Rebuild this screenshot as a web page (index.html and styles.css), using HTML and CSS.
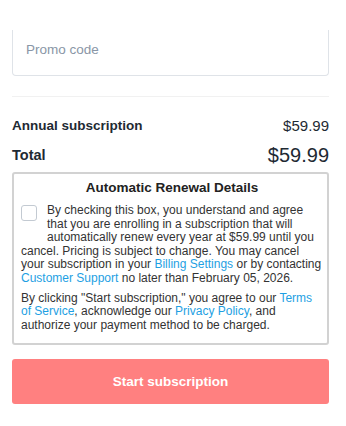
FILE: index.html
```html
<!DOCTYPE html>
<html lang="en">
<head>
<meta charset="utf-8">
<title>Checkout</title>
<link rel="stylesheet" href="styles.css">
</head>
<body>
<div class="page">
  <div class="promo"><span class="promo-text">Promo code</span></div>
  <hr class="divider">
  <div class="row row-annual">
    <span class="label">Annual subscription</span>
    <span class="price">$59.99</span>
  </div>
  <div class="row row-total">
    <span class="label-total">Total</span>
    <span class="price-total">$59.99</span>
  </div>
  <div class="renewal">
    <h2 class="renewal-title">Automatic Renewal Details</h2>
    <p class="renewal-text"><span class="checkbox"></span>By checking this box, you understand and agree that you are enrolling in a subscription that will automatically renew every year at $59.99 until you cancel. Pricing is subject to change. You may cancel your subscription in your <a href="#" class="link">Billing Settings</a> or by contacting <a href="#" class="link">Customer Support</a> no later than February 05, 2026.</p>
    <p class="renewal-text">By clicking "Start subscription," you agree to our <a href="#" class="link">Terms of Service</a>, acknowledge our <a href="#" class="link">Privacy Policy</a>, and authorize your payment method to be charged.</p>
  </div>
  <button class="start-btn" type="button">Start subscription</button>
</div>
</body>
</html>
```
FILE: styles.css
```css
html, body {
  margin: 0;
  padding: 0;
  background: #ffffff;
}
body {
  font-family: "Liberation Sans", Arial, sans-serif;
  color: #222;
}
.page {
  padding: 30px 17px 0 12px;
  display: flex;
  flex-direction: column;
}
.promo {
  height: 46px;
  box-sizing: border-box;
  border: 1px solid #dfe3e8;
  border-top: 0;
  border-radius: 0 0 4px 4px;
  padding: 0 0 6px 13px;
  display: flex;
  align-items: center;
}
.promo-text {
  font-size: 13.5px;
  color: #8996a6;
}
.divider {
  border: 0;
  border-top: 1px solid #f1f1f1;
  margin: 20px 0 0 0;
  height: 0;
}
.row {
  display: flex;
  justify-content: space-between;
  align-items: center;
  color: #1e2a33;
}
.row-annual {
  margin-top: 19px;
  height: 18px;
}
.label {
  font-weight: bold;
  font-size: 13.5px;
}
.price {
  font-size: 15px;
}
.row-total {
  margin-top: 9px;
  height: 24px;
}
.label-total {
  font-weight: bold;
  font-size: 14.5px;
}
.price-total {
  font-size: 20px;
}
.renewal {
  margin-top: 5px;
  border: 2px solid #d2d2d2;
  border-radius: 3px;
  padding: 6px 4px 11px 7px;
  color: #333;
}
.renewal-title {
  margin: 0;
  text-align: center;
  font-size: 13.5px;
  font-weight: bold;
  line-height: 16px;
  color: #222;
}
.renewal-text {
  margin: 8px 0 0 0;
  font-size: 12px;
  line-height: 13.6px;
}
.renewal-text + .renewal-text {
  margin-top: 6px;
}
.checkbox {
  float: left;
  width: 16px;
  height: 16px;
  box-sizing: border-box;
  border: 1px solid #c3cad2;
  border-radius: 3px;
  margin: 1px 10px 11px 0;
  background: #fff;
}
.link {
  color: #1e9fe3;
  text-decoration: none;
}
.start-btn {
  margin-top: 14px;
  height: 45px;
  border: 0;
  border-radius: 3px;
  background: #ff8080;
  color: #fff;
  font-family: "Liberation Sans", Arial, sans-serif;
  font-weight: bold;
  font-size: 13.5px;
}
```
